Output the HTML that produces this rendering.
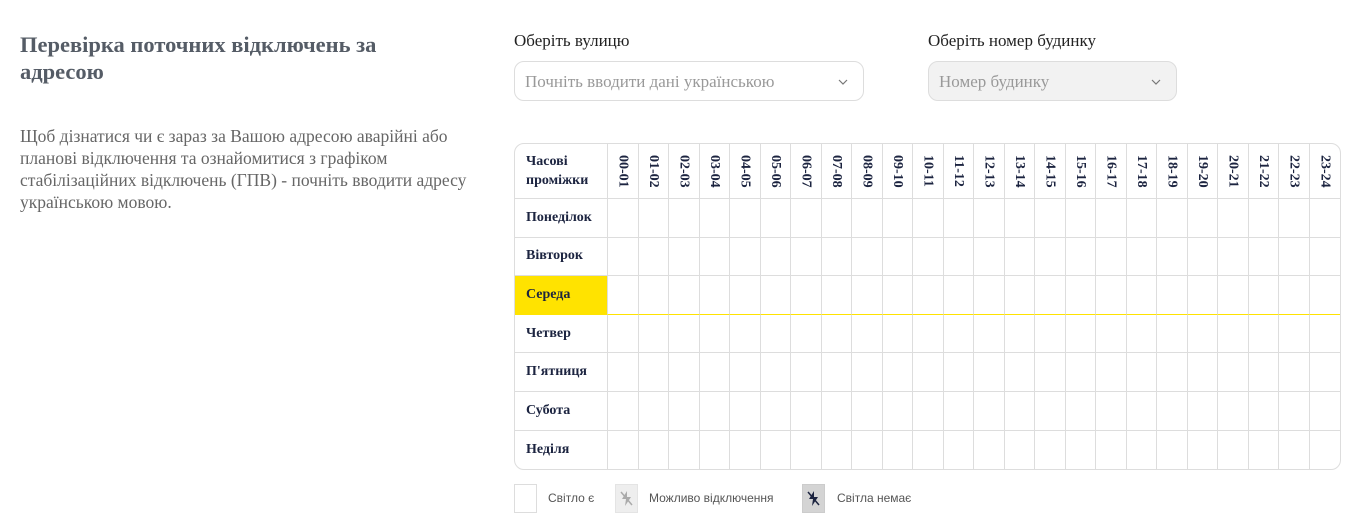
<!DOCTYPE html>
<html><head><meta charset="utf-8"><style>
body{margin:0;width:1366px;height:517px;background:#fff;position:relative;overflow:hidden;font-family:"Liberation Serif",serif}
.a{position:absolute}
h1{position:absolute;left:20px;top:31px;margin:0;font-size:22.5px;line-height:27px;font-weight:bold;color:#555c66;width:400px}
.p{left:20px;top:125px;font-size:17.5px;line-height:22px;color:#666;width:450px}
.lbl{font-size:17px;color:#222;top:31px}
.inp{border:1px solid #ddd;border-radius:10px;box-sizing:border-box;height:40px;top:61px;font-size:17px;color:#999;line-height:40px;padding-left:10px}
.chev{position:absolute;right:14px;top:14px}
table{position:absolute;left:514px;top:143px;border-collapse:separate;border-spacing:0;border:1px solid #ddd;border-radius:10px;width:827px;table-layout:fixed}
td{border-right:1px solid #ddd;border-bottom:1px solid #ddd;padding:0;height:38.6px;box-sizing:border-box}
tr td:last-child{border-right:none}
tr:last-child td{border-bottom:none}
td.d{width:93px;font-weight:bold;font-size:14px;color:#1c2440;padding-left:11px}
tr.h td{height:55px;font-weight:bold;font-size:14px;color:#1c2440}
tr.h td.d{line-height:19px}
.v{writing-mode:vertical-rl;margin:0 auto;line-height:15px}
tr.y td{border-bottom:1px solid #ffe300 !important}
tr.y td.d{background:#ffe300}
.lg{font-family:"Liberation Sans",sans-serif;font-size:12px;color:#555;top:491px}
.bx{top:484px;width:23px;height:29px;box-sizing:border-box;border:1px solid #ddd}
</style></head><body>
<h1>Перевірка поточних відключень за адресою</h1>
<div class="a p">Щоб дізнатися чи є зараз за Вашою адресою аварійні або планові відключення та ознайомитися з графіком стабілізаційних відключень (ГПВ) - почніть вводити адресу українською мовою.</div>
<div class="a lbl" style="left:514px">Оберіть вулицю</div>
<div class="a lbl" style="left:928px">Оберіть номер будинку</div>
<div class="a inp" style="left:514px;width:350px">Почніть вводити дані українською<svg class="chev" width="12" height="12" viewBox="0 0 12 12"><path d="M2 4l4 4 4-4" fill="none" stroke="#777" stroke-width="1.2"/></svg></div>
<div class="a inp" style="left:928px;width:249px;background:#f2f2f2">Номер будинку<svg class="chev" width="12" height="12" viewBox="0 0 12 12"><path d="M2 4l4 4 4-4" fill="none" stroke="#777" stroke-width="1.2"/></svg></div>
<table>
<tr class="h"><td class="d">Часові проміжки</td>
<td><div class="v">00-01</div></td><td><div class="v">01-02</div></td><td><div class="v">02-03</div></td><td><div class="v">03-04</div></td><td><div class="v">04-05</div></td><td><div class="v">05-06</div></td><td><div class="v">06-07</div></td><td><div class="v">07-08</div></td><td><div class="v">08-09</div></td><td><div class="v">09-10</div></td><td><div class="v">10-11</div></td><td><div class="v">11-12</div></td><td><div class="v">12-13</div></td><td><div class="v">13-14</div></td><td><div class="v">14-15</div></td><td><div class="v">15-16</div></td><td><div class="v">16-17</div></td><td><div class="v">17-18</div></td><td><div class="v">18-19</div></td><td><div class="v">19-20</div></td><td><div class="v">20-21</div></td><td><div class="v">21-22</div></td><td><div class="v">22-23</div></td><td><div class="v">23-24</div></td></tr>
<tr><td class="d">Понеділок</td><td></td><td></td><td></td><td></td><td></td><td></td><td></td><td></td><td></td><td></td><td></td><td></td><td></td><td></td><td></td><td></td><td></td><td></td><td></td><td></td><td></td><td></td><td></td><td></td></tr>
<tr><td class="d">Вівторок</td><td></td><td></td><td></td><td></td><td></td><td></td><td></td><td></td><td></td><td></td><td></td><td></td><td></td><td></td><td></td><td></td><td></td><td></td><td></td><td></td><td></td><td></td><td></td><td></td></tr>
<tr class="y"><td class="d">Середа</td><td></td><td></td><td></td><td></td><td></td><td></td><td></td><td></td><td></td><td></td><td></td><td></td><td></td><td></td><td></td><td></td><td></td><td></td><td></td><td></td><td></td><td></td><td></td><td></td></tr>
<tr><td class="d">Четвер</td><td></td><td></td><td></td><td></td><td></td><td></td><td></td><td></td><td></td><td></td><td></td><td></td><td></td><td></td><td></td><td></td><td></td><td></td><td></td><td></td><td></td><td></td><td></td><td></td></tr>
<tr><td class="d">П'ятниця</td><td></td><td></td><td></td><td></td><td></td><td></td><td></td><td></td><td></td><td></td><td></td><td></td><td></td><td></td><td></td><td></td><td></td><td></td><td></td><td></td><td></td><td></td><td></td><td></td></tr>
<tr><td class="d">Субота</td><td></td><td></td><td></td><td></td><td></td><td></td><td></td><td></td><td></td><td></td><td></td><td></td><td></td><td></td><td></td><td></td><td></td><td></td><td></td><td></td><td></td><td></td><td></td><td></td></tr>
<tr><td class="d">Неділя</td><td></td><td></td><td></td><td></td><td></td><td></td><td></td><td></td><td></td><td></td><td></td><td></td><td></td><td></td><td></td><td></td><td></td><td></td><td></td><td></td><td></td><td></td><td></td><td></td></tr>
</table>
<div class="a bx" style="left:514px"></div>
<div class="a lg" style="left:548px">Світло є</div>
<div class="a bx" style="left:615px;background:#eee;border-color:#e4e4e4"><svg width="21" height="27" viewBox="0 0 21 27"><path d="M11 6L6 14h4l-1 7 6-9h-4z" fill="#aaa"/><path d="M5 7l11 13" stroke="#aaa" stroke-width="1.5"/></svg></div>
<div class="a lg" style="left:649px">Можливо відключення</div>
<div class="a bx" style="left:802px;background:#d4d4d4;border-color:#ccc"><svg width="21" height="27" viewBox="0 0 21 27"><path d="M11 6L6 14h4l-1 7 6-9h-4z" fill="#1c2440"/><path d="M5 7l11 13" stroke="#1c2440" stroke-width="1.5"/></svg></div>
<div class="a lg" style="left:837px">Світла немає</div>
</body></html>
